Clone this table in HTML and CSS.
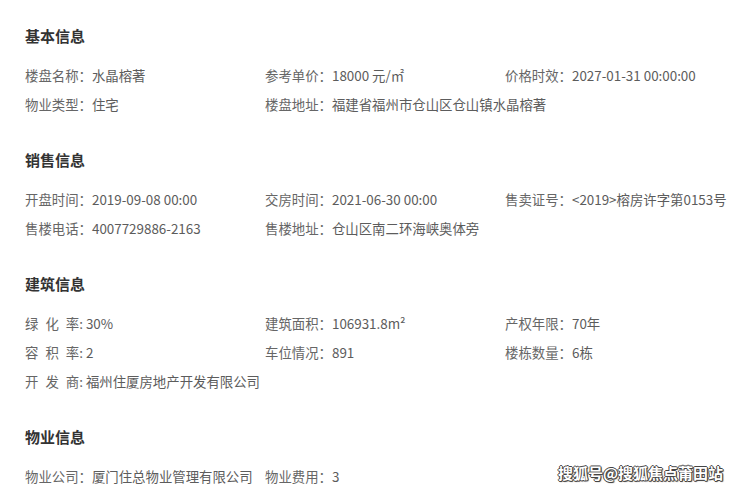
FILE: index.html
```html
<!DOCTYPE html>
<html>

<head>
  <meta charset="utf-8">
  <link rel="stylesheet" href="styles.css">
</head>

<body>
  <div class="page">
    <div class="section">
      <h2 class="title">基本信息</h2>
      <div class="grid">
        <div class="item"><span class="label">楼盘名称：</span><span class="value">水晶榕著</span></div>
        <div class="item"><span class="label">参考单价：</span><span class="value">18000 元/㎡</span></div>
        <div class="item"><span class="label">价格时效：</span><span class="value">2027-01-31 00:00:00</span></div>
        <div class="item"><span class="label">物业类型：</span><span class="value">住宅</span></div>
        <div class="item wide"><span class="label">楼盘地址：</span><span class="value">福建省福州市仓山区仓山镇水晶榕著</span></div>
      </div>
    </div>

    <div class="section">
      <h2 class="title">销售信息</h2>
      <div class="grid">
        <div class="item"><span class="label">开盘时间：</span><span class="value">2019-09-08 00:00</span></div>
        <div class="item"><span class="label">交房时间：</span><span class="value">2021-06-30 00:00</span></div>
        <div class="item"><span class="label">售卖证号：</span><span class="value">&lt;2019&gt;榕房许字第0153号</span></div>
        <div class="item"><span class="label">售楼电话：</span><span class="value">4007729886-2163</span></div>
        <div class="item wide"><span class="label">售楼地址：</span><span class="value">仓山区南二环海峡奥体旁</span></div>
      </div>
    </div>

    <div class="section">
      <h2 class="title">建筑信息</h2>
      <div class="grid">
        <div class="item"><span class="label short"><span class="spread">绿化</span>率:</span><span class="value">30%</span></div>
        <div class="item"><span class="label">建筑面积：</span><span class="value">106931.8m²</span></div>
        <div class="item"><span class="label">产权年限：</span><span class="value">70年</span></div>
        <div class="item"><span class="label short"><span class="spread">容积</span>率:</span><span class="value">2</span></div>
        <div class="item"><span class="label">车位情况：</span><span class="value">891</span></div>
        <div class="item"><span class="label">楼栋数量：</span><span class="value">6栋</span></div>
        <div class="item full"><span class="label short"><span class="spread">开发</span>商:</span><span class="value">福州住厦房地产开发有限公司</span></div>
      </div>
    </div>

    <div class="section">
      <h2 class="title">物业信息</h2>
      <div class="grid">
        <div class="item"><span class="label">物业公司：</span><span class="value">厦门住总物业管理有限公司</span></div>
        <div class="item"><span class="label">物业费用：</span><span class="value">3</span></div>
      </div>
    </div>
  </div>

  <div class="watermark">搜狐号@搜狐焦点莆田站</div>
</body>

</html>
```

FILE: styles.css
```css
body {
  margin: 0;
  background-color: #fff;
  font-family: "Noto Sans CJK SC", "Noto Sans", sans-serif;
  color: #666;
}

.page {
  padding: 26px 0 0 25px;
}

.section {
  margin-bottom: 31px;
}

.section:last-child {
  margin-bottom: 0;
}

.title {
  margin: 0 0 15px;
  font-size: 15px;
  line-height: 20px;
  font-weight: bold;
  color: #333;
}

/* 三列信息 */
.grid {
  display: grid;
  grid-template-columns: 240px 240px 240px;
}

.item {
  font-size: 13.4px;
  line-height: 29px;
  height: 29px;
  white-space: nowrap;
}

.item.wide {
  grid-column: span 2;
}

.item.full {
  grid-column: span 3;
}

.label {
  color: #666;
}

/* 三个字的标签拉开间距 */
.spread {
  letter-spacing: 7px;
}

.label.short + .value {
  margin-left: 3px;
}

.value {
  color: #5c5c5c;
}

.watermark {
  position: absolute;
  right: 17px;
  bottom: 9px;
  font-family: "Noto Sans CJK SC", sans-serif;
  font-size: 15px;
  font-weight: bold;
  line-height: 18px;
  color: #fff;
  text-shadow: 1px 0 0 #444, -1px 0 0 #444, 0 1px 0 #444, 0 -1px 0 #444, 1px 1px 1px #333;
}
```
